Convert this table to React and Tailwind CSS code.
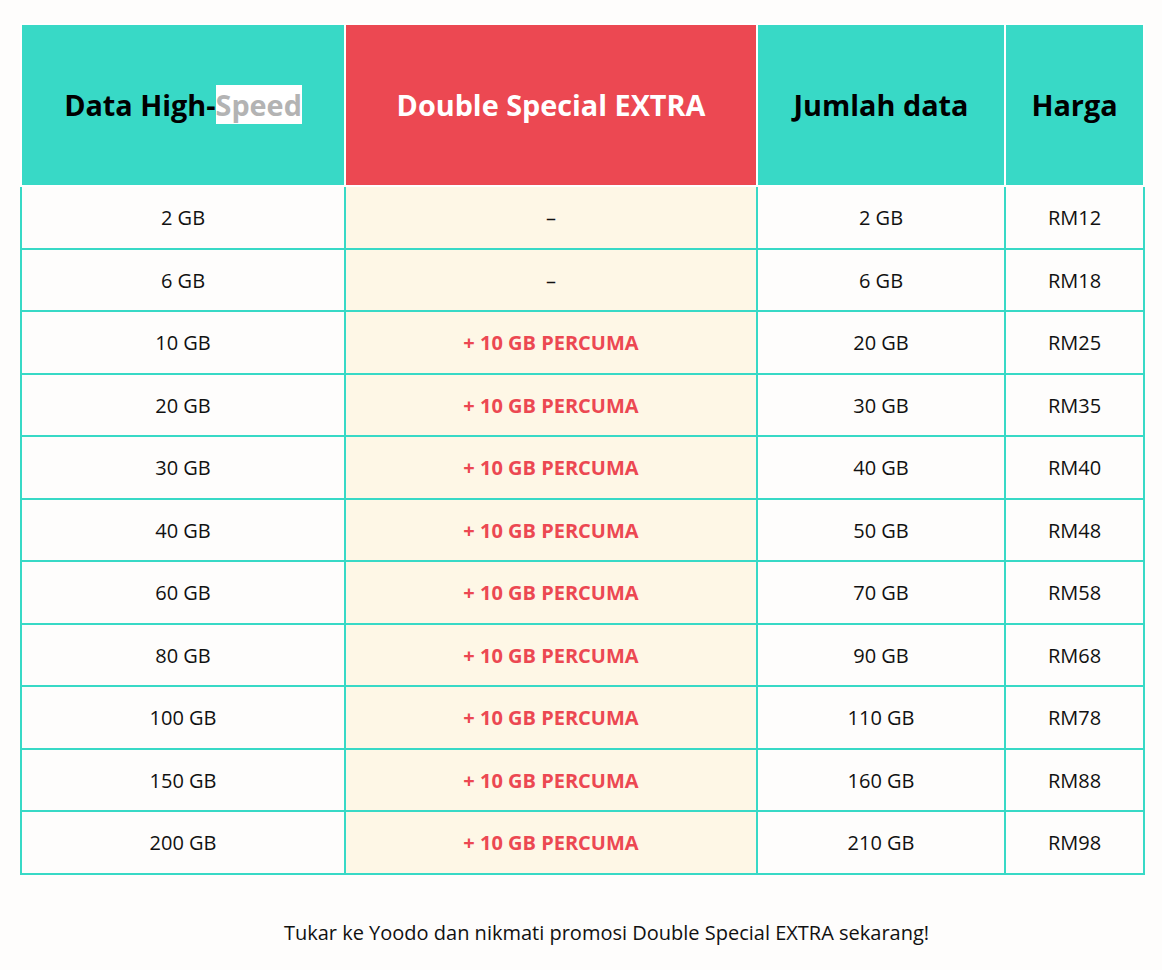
import React from 'react';

const rows = [
  ['2 GB', null, '2 GB', 'RM12'],
  ['6 GB', null, '6 GB', 'RM18'],
  ['10 GB', '+ 10 GB PERCUMA', '20 GB', 'RM25'],
  ['20 GB', '+ 10 GB PERCUMA', '30 GB', 'RM35'],
  ['30 GB', '+ 10 GB PERCUMA', '40 GB', 'RM40'],
  ['40 GB', '+ 10 GB PERCUMA', '50 GB', 'RM48'],
  ['60 GB', '+ 10 GB PERCUMA', '70 GB', 'RM58'],
  ['80 GB', '+ 10 GB PERCUMA', '90 GB', 'RM68'],
  ['100 GB', '+ 10 GB PERCUMA', '110 GB', 'RM78'],
  ['150 GB', '+ 10 GB PERCUMA', '160 GB', 'RM88'],
  ['200 GB', '+ 10 GB PERCUMA', '210 GB', 'RM98'],
];

const App = () => {
  const td = "border-2 border-[#38d9c6] h-[62.5px] p-0 pt-[2px] text-center align-middle text-[20px] leading-[30px]";

  return (
    <div className="min-h-screen bg-[#fefdfc] text-[#111] pt-[23px] px-5" style={{ fontFamily: '"Open Sans", "Noto Sans", sans-serif' }}>
      {/* price table */}
      <table className="border-collapse w-[1123px] table-fixed">
        <colgroup>
          <col className="w-[324px]" />
          <col className="w-[412px]" />
          <col className="w-[248px]" />
          <col className="w-[139px]" />
        </colgroup>
        <thead>
          <tr>
            <th className="border-2 border-white bg-[#38d9c6] h-[162px] text-[28.8px] font-bold text-black">
              Data High-<span className="bg-white text-[#b3b3b3]">Speed</span>
            </th>
            <th className="border-2 border-white bg-[#ec4852] text-[28.8px] font-bold text-white">
              Double Special EXTRA
            </th>
            <th className="border-2 border-white bg-[#38d9c6] text-[28.8px] font-bold text-black">
              Jumlah data
            </th>
            <th className="border-2 border-white bg-[#38d9c6] text-[28.8px] font-bold text-black">
              Harga
            </th>
          </tr>
        </thead>
        <tbody>
          {rows.map((r, i) => (
            <tr key={i}>
              <td className={td}>{r[0]}</td>
              <td className={td + " bg-[#fef7e6]"}>
                {r[1] ? <span className="font-bold text-[#ec4852]">{r[1]}</span> : '–'}
              </td>
              <td className={td}>{r[2]}</td>
              <td className={td}>{r[3]}</td>
            </tr>
          ))}
        </tbody>
      </table>

      <p className="text-center text-[20px] leading-[30px] mt-[43px] pl-[51px]">
        Tukar ke Yoodo dan nikmati promosi Double Special EXTRA sekarang!
      </p>
    </div>
  );
};

export default App;
